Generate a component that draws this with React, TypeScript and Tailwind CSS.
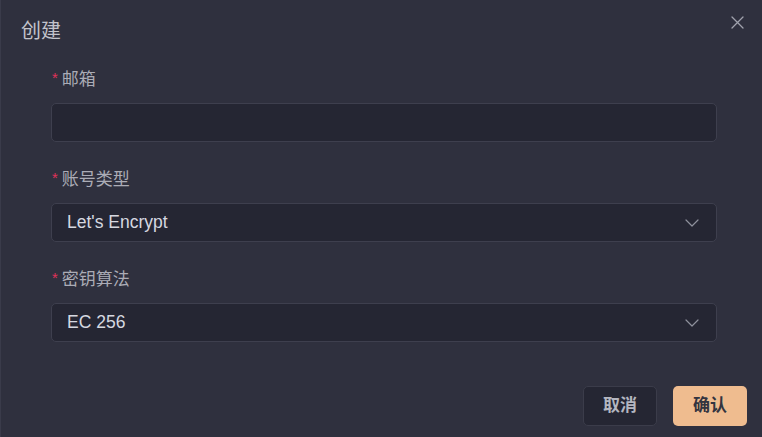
import React from "react";

const font = { fontFamily: '"Liberation Sans", "Noto Sans CJK SC", sans-serif' };

function Chevron() {
  return (
    <svg width="14" height="8" viewBox="0 0 14 8" fill="none" className="text-[#8e909c]">
      <path d="M1 1l6 6 6-6" stroke="currentColor" strokeWidth="1.2" strokeLinecap="round" strokeLinejoin="round" />
    </svg>
  );
}

function Label({ text }: { text: string }) {
  return (
    <div className="flex items-center h-[24px] pl-[1px]">
      <span className="text-[15px] text-[#e0325a] mr-[4px] leading-none -mt-[5px]">*</span>
      <span className="text-[17px] text-[#abacb6] leading-[24px]">{text}</span>
    </div>
  );
}

function Select({ value }: { value: string }) {
  return (
    <div className="h-[39px] mt-[11px] rounded-[5px] border border-[#3e3f4e] bg-[#252633] flex items-center justify-between pl-[15px] pr-[17px]">
      <span className="text-[17.5px] text-[#d6d8e0]">{value}</span>
      <Chevron />
    </div>
  );
}

export default function App() {
  return (
    <div style={font} className="w-[762px] h-[437px] bg-[#2f303e] border-l border-[#3a3b4a] flex flex-col relative">
      <div className="pl-[20px] pt-[17px] h-[44px] text-[20px] leading-[28px] text-[#c2c3cb]">创建</div>
      <button className="absolute right-[18px] top-[16px] text-[#a0a2ad]">
        <svg width="13" height="13" viewBox="0 0 13 13" fill="none">
          <path d="M1 1l11 11M12 1L1 12" stroke="currentColor" strokeWidth="1.3" strokeLinecap="round" />
        </svg>
      </button>
      <div className="pl-[50px] pr-[45px] pt-[24px] flex flex-col">
        <Label text="邮箱" />
        <div className="h-[39px] mt-[11px] rounded-[5px] border border-[#3e3f4e] bg-[#252633]" />
        <div className="mt-[26px]">
          <Label text="账号类型" />
        </div>
        <Select value="Let's Encrypt" />
        <div className="mt-[26px]">
          <Label text="密钥算法" />
        </div>
        <Select value="EC 256" />
      </div>
      <div className="mt-auto mb-[11px] flex justify-end gap-[16px] pr-[15px]">
        <button className="w-[74px] h-[40px] rounded-[5px] border border-[#3b3c4a] bg-[#252633] text-[17px] font-bold text-[#b4b6c0]">取消</button>
        <button className="w-[74px] h-[40px] rounded-[5px] bg-[#efbc8f] text-[17px] font-bold text-[#33343f]">确认</button>
      </div>
    </div>
  );
}
